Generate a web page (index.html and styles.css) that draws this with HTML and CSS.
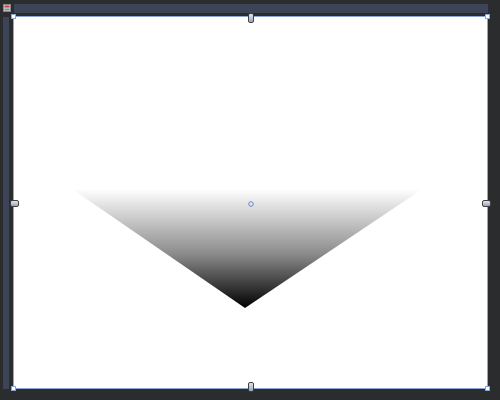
FILE: index.html
```html
<!DOCTYPE html>
<html>
<head>
<meta charset="utf-8">
<link rel="stylesheet" href="styles.css">
</head>
<body>
<div class="app">
  <div class="corner">
    <svg class="icon" width="8" height="8" viewBox="0 0 8 8">
      <rect x="0.5" y="0.5" width="7" height="7" fill="#d8d8d8" stroke="#888"/>
      <rect x="1.5" y="1.5" width="5" height="2" fill="#c04040"/>
      <rect x="1.5" y="4.5" width="5" height="2" fill="#8a8aa8"/>
    </svg>
  </div>
  <div class="ruler-top"></div>
  <div class="ruler-left"></div>
  <div class="canvas">
    <svg class="art" width="473" height="371" viewBox="14 17 473 371">
      <defs>
        <linearGradient id="g" x1="0" y1="0" x2="0" y2="1">
          <stop offset="0" stop-color="#ffffff"/>
          <stop offset="0.55" stop-color="#8a8a8a"/>
          <stop offset="1" stop-color="#000000"/>
        </linearGradient>
      </defs>
      <polygon points="72,189 421,190 245,308" fill="url(#g)"/>
      <circle cx="251" cy="204" r="2.3" fill="none" stroke="#6a8ad0" stroke-width="1"/>
    </svg>
    <span class="sq sq-tl"></span>
    <span class="sq sq-tr"></span>
    <span class="sq sq-bl"></span>
    <span class="sq sq-br"></span>
    <span class="h h-top"></span>
    <span class="h h-bottom"></span>
    <span class="h h-left"></span>
    <span class="h h-right"></span>
  </div>
</div>
</body>
</html>
```
FILE: styles.css
```css
html, body {
  margin: 0;
  padding: 0;
  background: #2b2c2e;
  width: 500px;
  height: 400px;
  overflow: hidden;
}
.app {
  display: grid;
  grid-template-columns: 13px 475px;
  grid-template-rows: 16px 373px;
}
.corner {
  padding: 4px 0 0 3px;
}
.icon {
  display: block;
}
.ruler-top {
  margin-top: 4px;
  height: 9px;
  margin-left: 1px;
  width: 474px;
  background: #3b4557;
}
.ruler-left {
  margin-left: 3px;
  width: 6px;
  margin-top: 1px;
  height: 372px;
  background: #3b4557;
}
.canvas {
  position: relative;
  border: 1px solid #8ea6d4;
  background: #ffffff;
}
.art {
  display: block;
}
.sq {
  position: absolute;
  width: 3px;
  height: 3px;
  background: #ffffff;
  border: 1px solid #8ea6d4;
}
.sq-tl { left: -3px; top: -3px; }
.sq-tr { right: -3px; top: -3px; }
.sq-bl { left: -3px; bottom: -3px; }
.sq-br { right: -3px; bottom: -3px; }
.h {
  position: absolute;
  background: linear-gradient(#dfe6f4, #9aa6b8);
  border: 1px solid #404040;
  border-radius: 2px;
}
.h-top { left: 234px; top: -4px; width: 4px; height: 8px; }
.h-bottom { left: 234px; bottom: -4px; width: 4px; height: 8px; }
.h-left { left: -4px; top: 183px; width: 7px; height: 5px; }
.h-right { right: -4px; top: 183px; width: 7px; height: 5px; }
```
